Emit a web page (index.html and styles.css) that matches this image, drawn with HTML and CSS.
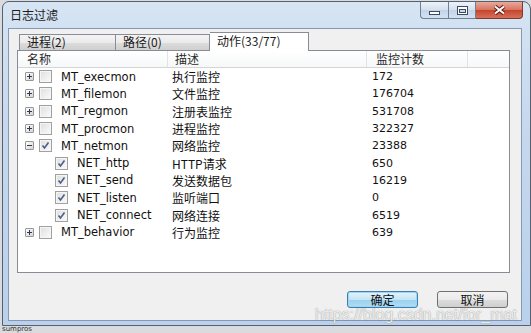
FILE: index.html
```html
<!DOCTYPE html>
<html lang="zh-CN">
<head>
  <meta charset="UTF-8" />
  <title>日志过滤</title>
  <link rel="stylesheet" href="styles.css">
</head>
<body>
  <div class="window">
    <div class="titlebar">
      <span class="title">日志过滤</span>
      <div class="caption">
        <span class="cap min">
          <svg width="11" height="4"><rect x="0.5" y="0.5" width="10" height="3" fill="#fff" stroke="#3c4b63"/></svg>
        </span>
        <span class="cap max">
          <svg width="11" height="9"><rect x="0.5" y="0.5" width="10" height="8" fill="#fff" stroke="#3c4b63"/><rect x="2.5" y="3.5" width="6" height="3" fill="#c9d8ea" stroke="#3c4b63"/></svg>
        </span>
        <span class="cap close">
          <svg width="13" height="10"><path d="M2 1.5 L11 8.5 M11 1.5 L2 8.5" stroke="#5b1e14" stroke-width="4"/><path d="M2 1.5 L11 8.5 M11 1.5 L2 8.5" stroke="#fff" stroke-width="2"/></svg>
        </span>
      </div>
    </div>

    <div class="client">
      <div class="tabs">
        <span class="tab t1">进程(2)</span>
        <span class="tab t2">路径(0)</span>
        <span class="tab active">动作(33/77)</span>
      </div>

      <div class="panel">
        <div class="head">
          <span class="hcol c-name">名称</span>
          <span class="hcol c-desc">描述</span>
          <span class="hcol c-count">监控计数</span>
          <span class="hcol c-rest"></span>
        </div>
        <div id="rows"></div>
      </div>

      <div class="buttons">
        <button class="btn default">确定</button>
        <button class="btn">取消</button>
      </div>
    </div>

    <div class="watermark">https://blog.csdn.net/for_mat</div>
  </div>
  <div class="behind">sumpros</div>

  <script>
    const items = [
      { name: 'MT_execmon', desc: '执行监控', count: 172, expand: '+', checked: false },
      { name: 'MT_filemon', desc: '文件监控', count: 176704, expand: '+', checked: false },
      { name: 'MT_regmon', desc: '注册表监控', count: 531708, expand: '+', checked: false },
      { name: 'MT_procmon', desc: '进程监控', count: 322327, expand: '+', checked: false },
      { name: 'MT_netmon', desc: '网络监控', count: 23388, expand: '-', checked: true },
      { name: 'NET_http', desc: 'HTTP请求', count: 650, child: true, checked: true },
      { name: 'NET_send', desc: '发送数据包', count: 16219, child: true, checked: true },
      { name: 'NET_listen', desc: '监听端口', count: 0, child: true, checked: true },
      { name: 'NET_connect', desc: '网络连接', count: 6519, child: true, checked: true },
      { name: 'MT_behavior', desc: '行为监控', count: 639, expand: '+', checked: false }
    ];

    const plus = '<svg width="7" height="7"><path d="M1 3.5h5M3.5 1v5" stroke="#2f3b4f" stroke-width="1"/></svg>';
    const minus = '<svg width="7" height="7"><path d="M1 3.5h5" stroke="#2f3b4f" stroke-width="1"/></svg>';
    const tick = '<svg width="11" height="11"><path d="M2.5 5.5 L4.5 8 L8.5 2.5" fill="none" stroke="#4a5f86" stroke-width="1.6"/></svg>';

    const rows = document.getElementById('rows');
    items.forEach(item => {
      const row = document.createElement('div');
      row.className = 'row';
      const exp = item.child
        ? '<span class="exp blank"></span>'
        : `<span class="exp">${item.expand === '+' ? plus : minus}</span>`;
      row.innerHTML = `
        <span class="cell c-name${item.child ? ' child' : ''}">
          ${exp}
          <span class="chk">${item.checked ? tick : ''}</span>
          <span class="label">${item.name}</span>
        </span>
        <span class="cell c-desc">${item.desc}</span>
        <span class="cell c-count">${item.count}</span>
      `;
      rows.appendChild(row);
    });
  </script>
</body>
</html>
```

FILE: styles.css
```css
body {
  margin: 0;
  width: 531px;
  height: 333px;
  overflow: hidden;
  background: #d9dbde;
  font-family: "Noto Sans CJK SC", sans-serif;
  position: relative;
}

.window {
  position: relative;
  margin: 1px 0 0 2px;
  width: 529px;
  box-sizing: border-box;
  border: 1px solid #56606e;
  border-radius: 7px 8px 0 0;
  background: linear-gradient(180deg, #d6e4f3 0%, #c5d8ee 40%, #b9d1ec 100%);
  padding: 0 8px 4px 5px;
}

.titlebar {
  height: 26px;
  display: flex;
  align-items: flex-start;
  justify-content: space-between;
}

.title {
  margin: 6px 0 0 2px;
  font-size: 12px;
  line-height: 14px;
  color: #1c1c1c;
}

.caption {
  display: flex;
  margin-right: -1px;
}

.cap {
  height: 17px;
  box-sizing: border-box;
  display: flex;
  align-items: center;
  justify-content: center;
  border: 1px solid #6f7f95;
  border-top: none;
}

.cap svg {
  display: block;
}

.min {
  width: 28px;
  border-radius: 0 0 0 4px;
  border-right: none;
  padding-top: 5px;
  background: linear-gradient(180deg, #eef3f9, #d3e0ee 50%, #c3d4e8 51%, #d3e2f2);
}

.max {
  width: 28px;
  background: linear-gradient(180deg, #eef3f9, #d3e0ee 50%, #c3d4e8 51%, #d3e2f2);
}

.close {
  width: 47px;
  border-left: none;
  border-color: #7e3a2e;
  border-radius: 0 0 4px 0;
  background: linear-gradient(180deg, #e9a99b, #d7735e 50%, #c4452c 51%, #d8705a);
}

.client {
  width: 514px;
  height: 293px;
  box-sizing: border-box;
  border: 1px solid #8799b0;
  background: #f0f0f0;
  padding: 3px 12px 0 8px;
}

.tabs {
  height: 19px;
  margin: 0 0 -1px 2px;
  display: flex;
  align-items: flex-end;
}

.tab {
  height: 16px;
  box-sizing: border-box;
  margin-bottom: 1px;
  padding: 0 0 0 7px;
  font-size: 12px;
  line-height: 14px;
  color: #1a1a1a;
  border: 1px solid #898c95;
  border-bottom: none;
  background: linear-gradient(180deg, #f3f3f3, #ebebeb 50%, #dddddd 51%, #cfcfcf);
}

.t1 {
  width: 96px;
  border-right: none;
}

.t2 {
  width: 95px;
}

.tab.active {
  position: relative;
  z-index: 1;
  width: 99px;
  height: 19px;
  margin-bottom: 0;
  padding-top: 1px;
  border-left: none;
  background: #fff;
}

.panel {
  width: 493px;
  height: 223px;
  box-sizing: border-box;
  border: 1px solid #898c95;
  background: #fff;
}

.head,
.row {
  display: grid;
  grid-template-columns: 150px 199px 101px 1fr;
}

.head {
  height: 17px;
  box-sizing: border-box;
  border-bottom: 1px solid #d5d5d5;
  background: linear-gradient(180deg, #ffffff, #f6f7f8);
}

.hcol {
  box-sizing: border-box;
  border-right: 1px solid #e2e3e5;
  font-size: 12px;
  line-height: 16px;
  color: #2a2a2a;
}

.hcol.c-name {
  padding-left: 9px;
}

.hcol.c-desc {
  padding-left: 7px;
}

.hcol.c-count {
  padding-left: 9px;
}

.hcol.c-rest {
  border-right: none;
}

.row {
  height: 17.3px;
  align-items: center;
}

.cell {
  color: #111;
  white-space: nowrap;
}

.cell.c-name {
  display: flex;
  align-items: center;
  gap: 5px;
  padding-left: 7px;
  font-family: "DejaVu Sans", sans-serif;
  font-size: 11.5px;
}

.cell.c-name.child {
  padding-left: 23px;
}

.cell.c-desc {
  padding-left: 4px;
  font-size: 12px;
}

.cell.c-count {
  padding-left: 5px;
  font-family: "DejaVu Sans", sans-serif;
  font-size: 11px;
}

.exp {
  width: 9px;
  height: 9px;
  box-sizing: border-box;
  border: 1px solid #969696;
  border-radius: 1px;
  background: linear-gradient(135deg, #ffffff, #d4d4d4);
  display: flex;
}

.exp svg {
  display: block;
}

.exp.blank {
  visibility: hidden;
}

.chk {
  width: 13px;
  height: 13px;
  box-sizing: border-box;
  margin-right: 4px;
  border: 1px solid #a0a0a0;
  background: linear-gradient(135deg, #dedede, #fbfbfb);
  box-shadow: inset 0 0 0 1px #f5f5f5;
  display: flex;
}

.chk svg {
  display: block;
}

.buttons {
  display: flex;
  justify-content: flex-end;
  gap: 19px;
  margin-top: 18px;
  padding-right: 1px;
}

.btn {
  width: 71px;
  height: 17px;
  padding: 0;
  font-family: "Noto Sans CJK SC", sans-serif;
  font-size: 12px;
  line-height: 14px;
  color: #111;
  border: 1px solid #707070;
  border-radius: 3px;
  background: linear-gradient(180deg, #f2f2f2, #ebebeb 50%, #dddddd 51%, #cfcfcf);
}

.btn.default {
  border-color: #3c7fb1;
  background: linear-gradient(180deg, #e5f4fc, #c4e5f6 50%, #98d1ef 51%, #b2dcf3);
  box-shadow: 0 0 0 1px #9fd5f2 inset;
}

.watermark {
  position: absolute;
  left: 312px;
  top: 304px;
  font-family: "Liberation Sans", sans-serif;
  font-size: 16px;
  line-height: 18px;
  color: rgba(255, 255, 255, 0.85);
  text-shadow: 0 0 1px rgba(70, 70, 70, 0.7);
  white-space: nowrap;
}

.behind {
  padding: 0 0 0 2px;
  font-family: "DejaVu Sans", sans-serif;
  font-size: 7px;
  line-height: 7px;
  color: #333;
}
```
